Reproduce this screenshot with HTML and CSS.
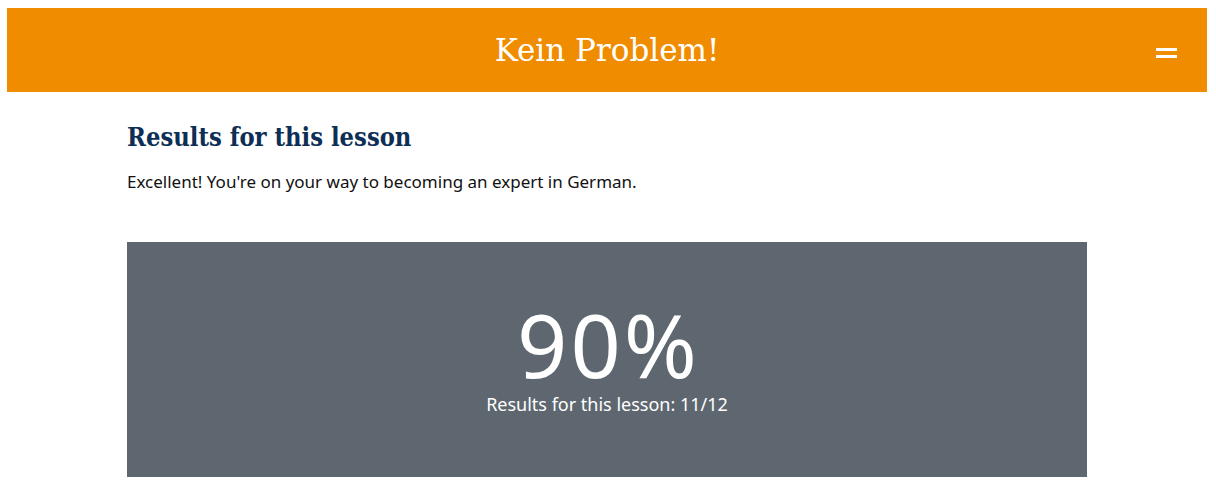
FILE: index.html
```html
<!DOCTYPE html>
<html lang="en">
<head>
<meta charset="utf-8">
<title>Kein Problem!</title>
<link rel="stylesheet" href="styles.css">
</head>
<body>
<header class="topbar">
  <h1 class="brand">Kein Problem!</h1>
  <button class="menu" aria-label="Menu"><span></span><span></span></button>
</header>
<main class="content">
  <h2 class="title">Results for this lesson</h2>
  <p class="intro">Excellent! You're on your way to becoming an expert in German.</p>
  <section class="score">
    <div class="percent">90%</div>
    <div class="detail">Results for this lesson: 11/12</div>
  </section>
</main>
</body>
</html>
```
FILE: styles.css
```css
html, body { background: #fff; }
body {
  margin: 8px 0 0 7px;
  width: 1200px;
  font-family: "Noto Sans", "Open Sans", sans-serif;
  overflow: hidden;
}
.topbar {
  position: relative;
  height: 84px;
  background: #f08c00;
  display: flex;
  align-items: center;
  justify-content: center;
}
.brand {
  margin: 0;
  font-family: "DejaVu Serif", "Liberation Serif", serif;
  font-weight: normal;
  font-size: 31px;
  color: #fff;
}
.menu {
  position: absolute;
  right: 30px;
  top: 40px;
  width: 21px;
  height: 10px;
  padding: 0;
  border: 0;
  background: transparent;
  display: flex;
  flex-direction: column;
  justify-content: space-between;
}
.menu span { display: block; height: 3px; background: #fff; }
.content {
  width: 960px;
  margin: 0 auto;
}
.title {
  margin: 30px 0 0;
  font-family: "DejaVu Serif", "Liberation Serif", serif;
  font-stretch: condensed;
  font-weight: bold;
  font-size: 25.3px;
  color: #0d2f55;
}
.intro {
  margin: 18px 0 0;
  font-size: 17px;
  color: #111;
}
.score {
  margin-top: 49px;
  height: 235px;
  background: #5e6770;
  color: #fff;
  display: flex;
  flex-direction: column;
  align-items: center;
  padding-top: 58px;
  box-sizing: border-box;
}
.percent {
  font-size: 88px;
  line-height: 1;
  letter-spacing: 3px;
  padding-left: 3px;
}
.detail {
  font-size: 18px;
  margin-top: 4px;
}
```
